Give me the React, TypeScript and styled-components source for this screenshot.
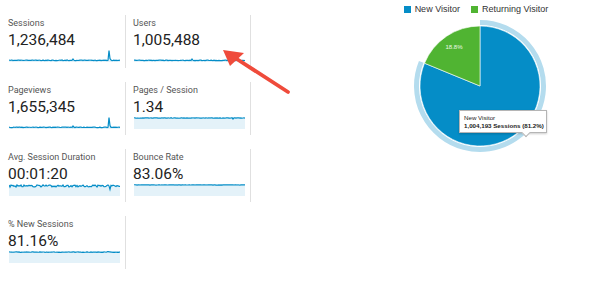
import React from 'react';
import styled, { createGlobalStyle } from 'styled-components';

const GlobalStyle = createGlobalStyle`
  html, body {
    margin: 0;
    padding: 0;
    background: #fff;
    font-family: Roboto, "Liberation Sans", Arial, sans-serif;
  }
`;

const Page = styled.div`
  position: relative;
  width: 600px;
  height: 283px;
  display: flex;
  overflow: hidden;
`;

const Cards = styled.div`
  display: grid;
  grid-template-columns: 125px 125px;
  grid-auto-rows: 53px;
  row-gap: 14px;
  padding: 15px 0 0 1px;
  align-content: start;
`;

const Card = styled.div`
  display: flex;
  flex-direction: column;
  padding: 0 6px 0 7px;
  border-right: 1px solid #e0e0e0;
`;

const Label = styled.div`
  margin-top: 3px;
  font-size: 9px;
  line-height: 11px;
  color: #555;
  white-space: nowrap;
`;

const Value = styled.div`
  margin-top: 2px;
  font-size: 15.5px;
  line-height: 18px;
  color: #222;
  white-space: nowrap;
`;

const Spark = styled.svg`
  display: block;
  margin: 1px 0 0 1px;
  width: 111px;
  height: 12px;
`;

const RightPanel = styled.div`
  margin-left: 129px;
  width: 200px;
  display: flex;
  flex-direction: column;
  align-items: center;
`;

const Legend = styled.div`
  display: flex;
  gap: 11px;
  margin-top: 3px;
  padding-right: 8px;
  height: 12px;
  align-items: center;
  font-family: "Liberation Sans", Arial, sans-serif;
  font-size: 9px;
  color: #333;
`;

const LegendItem = styled.div`
  display: flex;
  align-items: center;
  gap: 4px;
`;

const Swatch = styled.span<{ $color: string }>`
  width: 7px;
  height: 7px;
  background: ${(p) => p.$color};
`;

const PieWrap = styled.div`
  position: relative;
  margin-top: 1px;
  width: 140px;
  height: 140px;
`;

const Tooltip = styled.div`
  position: absolute;
  left: 49px;
  top: 94px;
  width: 88px;
  height: 23px;
  box-sizing: border-box;
  padding: 3px 4px;
  background: #fff;
  border: 1px solid #b5b5b5;
  box-shadow: 0 1px 2px rgba(0, 0, 0, 0.2);
  font-family: "Liberation Sans", Arial, sans-serif;
  font-size: 6.2px;
  line-height: 8px;
  color: #222;
  white-space: nowrap;

  &::after {
    content: '';
    position: absolute;
    left: 63px;
    bottom: -4px;
    width: 5px;
    height: 5px;
    background: #fff;
    border-right: 1px solid #b5b5b5;
    border-bottom: 1px solid #b5b5b5;
    transform: rotate(45deg);
  }
`;

const Strong = styled.div`
  font-weight: 700;
`;

const ArrowSvg = styled.svg`
  position: absolute;
  left: 215px;
  top: 40px;
  width: 85px;
  height: 60px;
`;

// deterministic noise
function rng(seed: number) {
  let s = seed;
  return () => {
    s = (s * 16807) % 2147483647;
    return (s - 1) / 2147483646;
  };
}

type SparkSpec = {
  base: number;
  noise: number;
  seed: number;
  bumps?: [number, number][];
};

function series({ base, noise, seed, bumps = [] }: SparkSpec) {
  const r = rng(seed);
  const pts: number[] = [];
  for (let x = 0; x <= 111; x++) {
    let y = base + (r() - 0.5) * noise;
    bumps.forEach(([bx, by]) => {
      if (x === bx) y = by;
    });
    pts.push(Math.max(0.4, Math.min(11.6, y)));
  }
  return pts;
}

const Sparkline = ({ spec }: { spec: SparkSpec }) => {
  const pts = series(spec);
  const line = pts.map((y, x) => `${x},${y.toFixed(2)}`).join(' ');
  return (
    <Spark viewBox="0 0 111 12" preserveAspectRatio="none">
      <polygon points={`0,12 ${line} 111,12`} fill="#e4f2f9" />
      <polyline points={line} fill="none" stroke="#058dc7" strokeWidth="1.2" />
    </Spark>
  );
};

const METRICS: { label: string; value: string; spark: SparkSpec }[] = [
  { label: 'Sessions', value: '1,236,484', spark: { base: 10.3, noise: 0.6, seed: 11, bumps: [[64, 9], [100, 0.5], [101, 8.5]] } },
  { label: 'Users', value: '1,005,488', spark: { base: 10.4, noise: 0.6, seed: 23, bumps: [[58, 9], [99, 8.5]] } },
  { label: 'Pageviews', value: '1,655,345', spark: { base: 10.3, noise: 0.6, seed: 37, bumps: [[64, 9], [100, 0.5], [101, 8.5]] } },
  { label: 'Pages / Session', value: '1.34', spark: { base: 1, noise: 0.5, seed: 41, bumps: [[99, 2]] } },
  { label: 'Avg. Session Duration', value: '00:01:20', spark: { base: 2, noise: 2.2, seed: 53, bumps: [[101, 5.5]] } },
  { label: 'Bounce Rate', value: '83.06%', spark: { base: 0.9, noise: 0.3, seed: 61 } },
  { label: '% New Sessions', value: '81.16%', spark: { base: 1.1, noise: 0.5, seed: 71, bumps: [[99, 0.5]] } },
];

// pie geometry
const CX = 70;
const CY = 70;
const newShare = 0.812;
const pt = (r: number, deg: number) => {
  const a = (deg * Math.PI) / 180;
  return `${(CX + r * Math.sin(a)).toFixed(2)},${(CY - r * Math.cos(a)).toFixed(2)}`;
};
const endDeg = newShare * 360;

const Pie = () => (
  <svg width="140" height="140" viewBox="0 0 140 140">
    <path
      d={`M${pt(63.5, 0)} A63.5,63.5 0 1 1 ${pt(63.5, endDeg)}`}
      fill="none"
      stroke="#b4dcee"
      strokeWidth="5"
    />
    <path d={`M${CX},${CY} L${pt(60, 0)} A60,60 0 1 1 ${pt(60, endDeg)} Z`} fill="#058dc7" stroke="#fff" strokeWidth="0.6" />
    <path d={`M${CX},${CY} L${pt(60, endDeg)} A60,60 0 0 1 ${pt(60, 0)} Z`} fill="#50b432" stroke="#fff" strokeWidth="0.6" />
    <text x="44" y="33" fontSize="6" fill="#eef8e8" fontFamily="Liberation Sans, Arial, sans-serif" textAnchor="middle">
      18.8%
    </text>
  </svg>
);

export default function App() {
  return (
    <Page>
      <GlobalStyle />
      <Cards>
        {METRICS.map((m) => (
          <Card key={m.label}>
            <Label>{m.label}</Label>
            <Value>{m.value}</Value>
            <Sparkline spec={m.spark} />
          </Card>
        ))}
      </Cards>
      <RightPanel>
        <Legend>
          <LegendItem>
            <Swatch $color="#058dc7" />
            New Visitor
          </LegendItem>
          <LegendItem>
            <Swatch $color="#50b432" />
            Returning Visitor
          </LegendItem>
        </Legend>
        <PieWrap>
          <Pie />
          <Tooltip>
            New Visitor
            <Strong>1,004,193 Sessions (81.2%)</Strong>
          </Tooltip>
        </PieWrap>
      </RightPanel>
      <ArrowSvg viewBox="0 0 85 60">
        <line x1="73" y1="52" x2="21" y2="18.5" stroke="#ef4b3b" strokeWidth="3.8" strokeLinecap="round" />
        <polygon points="8,10 29,13 15,26" fill="#ef4b3b" />
      </ArrowSvg>
    </Page>
  );
}
